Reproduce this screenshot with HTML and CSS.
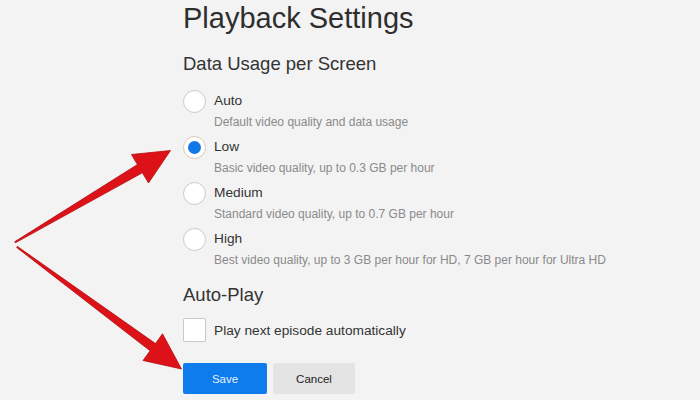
FILE: index.html
```html
<!DOCTYPE html>
<html lang="en">
<head>
<meta charset="utf-8">
<title>Playback Settings</title>
<link rel="stylesheet" href="styles.css">
</head>
<body>
<main class="page">
  <h1 class="title">Playback Settings</h1>
  <h2 class="section">Data Usage per Screen</h2>
  <div class="options">
    <div class="option">
      <span class="radio"></span>
      <span class="label">Auto</span>
      <span class="desc">Default video quality and data usage</span>
    </div>
    <div class="option">
      <span class="radio checked"></span>
      <span class="label">Low</span>
      <span class="desc">Basic video quality, up to 0.3 GB per hour</span>
    </div>
    <div class="option">
      <span class="radio"></span>
      <span class="label">Medium</span>
      <span class="desc">Standard video quality, up to 0.7 GB per hour</span>
    </div>
    <div class="option">
      <span class="radio"></span>
      <span class="label">High</span>
      <span class="desc">Best video quality, up to 3 GB per hour for HD, 7 GB per hour for Ultra HD</span>
    </div>
  </div>
  <h2 class="section autoplay">Auto-Play</h2>
  <div class="check-row">
    <span class="checkbox"></span>
    <span class="check-label">Play next episode automatically</span>
  </div>
  <div class="buttons">
    <button class="btn btn-save">Save</button>
    <button class="btn btn-cancel">Cancel</button>
  </div>
</main>
<svg class="arrows" width="700" height="400" viewBox="0 0 700 400" aria-hidden="true">
  <polygon class="arrow" points="14.6,241.8 137.4,164.6 131.5,154.5 170.5,150.5 148.5,183 142.4,172.8 15.4,242.8"/>
  <polygon class="arrow" points="16.6,247.4 150.1,350.8 143.0,360.5 181.5,369 162.5,333.8 155.5,343.6 17.4,246.4"/>
</svg>
</body>
</html>
```
FILE: styles.css
```css
html, body {
  margin: 0;
  padding: 0;
  background: #f3f3f3;
}
body {
  width: 700px;
  height: 400px;
  overflow: hidden;
  position: relative;
  font-family: "Liberation Sans", Arial, Helvetica, sans-serif;
  color: #333;
}
.page {
  padding-left: 183px;
}
.title {
  margin: 0;
  font-size: 29px;
  line-height: 36px;
  font-weight: normal;
  color: #2e2e2e;
}
.section {
  margin: 16px 0 0;
  font-size: 18.5px;
  line-height: 24px;
  font-weight: normal;
  color: #333;
}
.options {
  margin-top: 15px;
  display: flex;
  flex-direction: column;
  gap: 5px;
}
.option {
  display: grid;
  grid-template-columns: 23px 1fr;
  column-gap: 8px;
}
.radio {
  grid-row: 1;
  grid-column: 1;
  align-self: center;
  width: 23px;
  height: 23px;
  margin: -2px 0;
  box-sizing: border-box;
  border: 1px solid #c9c9c9;
  border-radius: 50%;
  background: #fff;
  position: relative;
}
.radio.checked {
  border-color: #d6c9b8;
}
.radio.checked::after {
  content: "";
  position: absolute;
  left: 4px;
  top: 4px;
  width: 13px;
  height: 13px;
  border-radius: 50%;
  background: #1178e8;
}
.label {
  grid-row: 1;
  grid-column: 2;
  font-size: 13.7px;
  line-height: 20px;
  color: #333;
}
.desc {
  grid-row: 2;
  grid-column: 2;
  padding-top: 2px;
  font-size: 12px;
  line-height: 19px;
  color: #8a8a8a;
}
.autoplay {
  margin-top: 13px;
}
.check-row {
  margin-top: 11px;
  display: flex;
  align-items: center;
  gap: 8px;
  height: 24px;
}
.checkbox {
  width: 23px;
  height: 24px;
  box-sizing: border-box;
  border: 1px solid #c9c9c9;
  border-radius: 2px;
  background: #fff;
}
.check-label {
  font-size: 13.7px;
  color: #333;
}
.buttons {
  margin-top: 21px;
  display: flex;
  gap: 6px;
}
.btn {
  height: 31px;
  border: none;
  border-radius: 2px;
  font-family: "Liberation Sans", Arial, Helvetica, sans-serif;
  font-size: 11.5px;
  padding: 0;
}
.btn-save {
  width: 84px;
  background: #0e7ced;
  color: #e8f1ff;
}
.btn-cancel {
  width: 82px;
  background: #e4e4e4;
  color: #222;
}
.arrows {
  position: absolute;
  left: 0;
  top: 0;
  pointer-events: none;
}
.arrow {
  fill: #dd1218;
  stroke: #b50d12;
  stroke-width: 0.8;
  stroke-linejoin: round;
}
```
